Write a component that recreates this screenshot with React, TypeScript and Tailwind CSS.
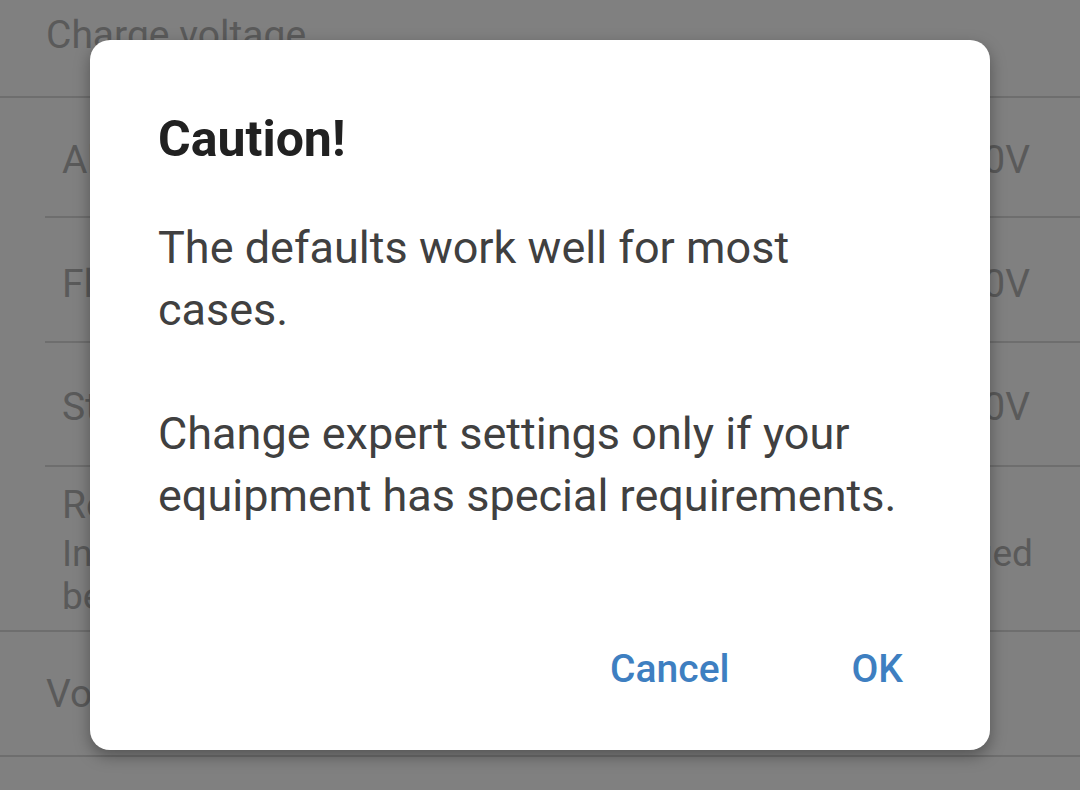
import React from "react";

const font = { fontFamily: "Roboto, 'Noto Sans', sans-serif" };

function Row({
  label,
  value,
  pt,
  h,
}: {
  label: string;
  value: string;
  pt: string;
  h: string;
}) {
  return (
    <div className={`ml-[45px] border-b-2 border-[#6e6e6e] ${h}`}>
      <div className={`flex justify-between pl-[17px] pr-[50px] ${pt} text-[39px] leading-[44px] text-[#5a5a5a]`}>
        <span>{label}</span>
        <span>{value}</span>
      </div>
    </div>
  );
}

export default function App() {
  return (
    <div className="relative h-[790px] w-[1080px] overflow-hidden bg-[#808080]" style={font}>
      {/* background list */}
      <div className="flex flex-col">
        <div className="h-[98px] border-b-2 border-[#6e6e6e] pl-[46px] pt-[13px] text-[39px] leading-[44px] text-[#5a5a5a]">
          Charge voltage
        </div>
        <Row label="Absorption voltage" value="14.40V" pt="pt-[40px]" h="h-[120px]" />
        <Row label="Float voltage" value="13.80V" pt="pt-[44px]" h="h-[125px]" />
        <Row label="Storage voltage" value="13.20V" pt="pt-[42px]" h="h-[124px]" />
        <div className="h-[165px] border-b-2 border-[#6e6e6e] pl-[62px] pr-[47px] pt-[16px] text-[#5a5a5a]">
          <div className="text-[39px] leading-[44px]">Re-bulk voltage offset</div>
          <div className="mt-[5px] text-[37px] leading-[43px]">
            <div className="[text-align-last:justify]">Increase voltage when the battery is discharged</div>
            <div>below this level.</div>
          </div>
        </div>
        <div className="h-[125px] border-b-2 border-[#6e6e6e] pl-[46px] pt-[40px] text-[39px] leading-[44px] text-[#5a5a5a]">
          Voltage compensation
        </div>
      </div>

      {/* dialog */}
      <div className="absolute left-[90px] top-[40px] flex h-[710px] w-[900px] flex-col rounded-[20px] bg-white pl-[68px] pt-[69px] shadow-[0_6px_16px_rgba(0,0,0,0.35)]">
        <div className="text-[50px] font-bold leading-[60px] text-[#212121]">Caution!</div>
        <div className="mt-[48px] max-w-[746px] text-[45px] leading-[62px] text-[#404040]">
          <p>The defaults work well for most cases.</p>
          <p className="mt-[62px]">Change expert settings only if your equipment has special requirements.</p>
        </div>
        <div className="mt-auto flex justify-end gap-[122px] pb-[57px] pr-[87px] text-[39px] font-medium leading-[48px] text-[#3e7fc1]">
          <span>Cancel</span>
          <span>OK</span>
        </div>
      </div>
    </div>
  );
}
